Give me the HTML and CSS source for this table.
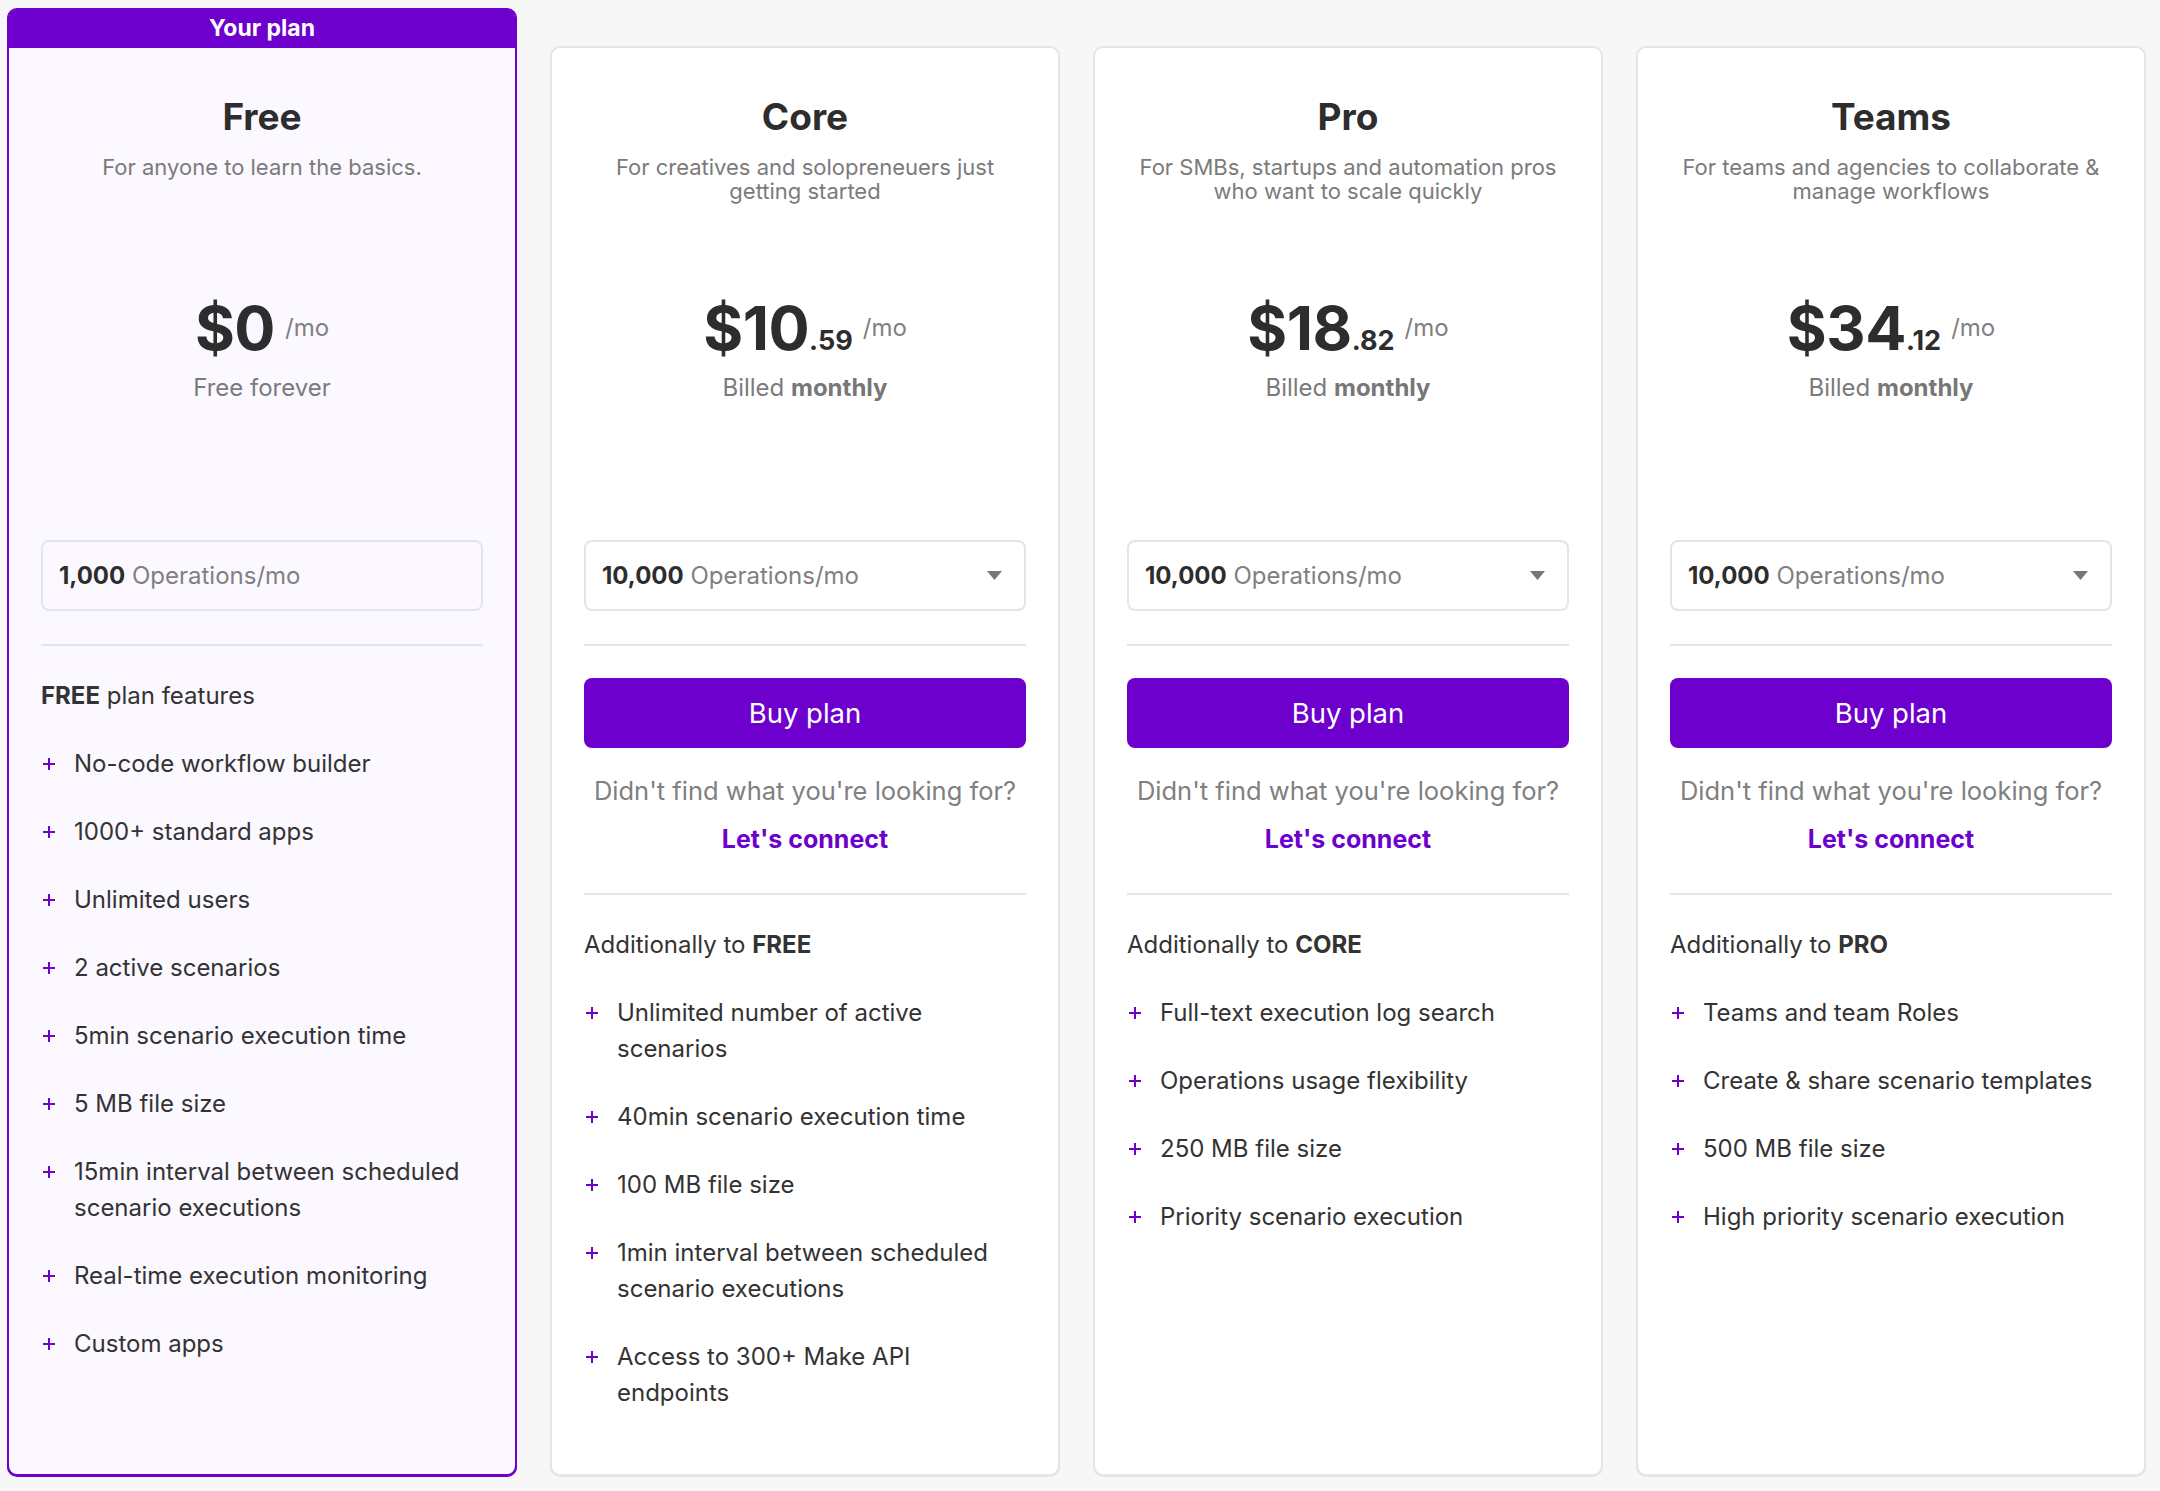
FILE: index.html
```html
<!DOCTYPE html>
<html lang="en">
<head>
  <meta charset="UTF-8" />
  <meta name="viewport" content="width=device-width, initial-scale=1.0" />
  <title>Pricing</title>
  <link rel="stylesheet" href="styles.css">
</head>
<body>
  <div class="plans">

    <div class="plan current">
      <div class="plan-badge">Your plan</div>
      <div class="plan-body">
        <h2>Free</h2>
        <p class="plan-desc">For anyone to learn the basics.</p>
        <div class="price"><span class="amount">$0</span><span class="per">/mo</span></div>
        <div class="billed">Free forever</div>
        <div class="ops"><b>1,000</b>&nbsp;Operations/mo</div>
        <hr>
        <div class="features-title"><b>FREE</b> plan features</div>
        <ul class="features">
          <li>No-code workflow builder</li>
          <li>1000+ standard apps</li>
          <li>Unlimited users</li>
          <li>2 active scenarios</li>
          <li>5min scenario execution time</li>
          <li>5 MB file size</li>
          <li>15min interval between scheduled scenario executions</li>
          <li>Real-time execution monitoring</li>
          <li>Custom apps</li>
        </ul>
      </div>
    </div>

    <div class="plan">
      <div class="plan-body">
        <h2>Core</h2>
        <p class="plan-desc">For creatives and solopreneuers just getting started</p>
        <div class="price"><span class="amount">$10<small>.59</small></span><span class="per">/mo</span></div>
        <div class="billed">Billed <b>monthly</b></div>
        <div class="ops select"><b>10,000</b>&nbsp;Operations/mo
          <svg class="caret" width="15" height="9" viewBox="0 0 15 9"><path d="M0 0h15L7.5 9z" fill="#777"/></svg>
        </div>
        <hr>
        <button class="buy">Buy plan</button>
        <p class="help">Didn't find what you're looking for?</p>
        <a class="connect" href="#">Let's connect</a>
        <hr>
        <div class="features-title">Additionally to <b>FREE</b></div>
        <ul class="features">
          <li>Unlimited number of active scenarios</li>
          <li>40min scenario execution time</li>
          <li>100 MB file size</li>
          <li>1min interval between scheduled scenario executions</li>
          <li>Access to 300+ Make API endpoints</li>
        </ul>
      </div>
    </div>

    <div class="plan">
      <div class="plan-body">
        <h2>Pro</h2>
        <p class="plan-desc">For SMBs, startups and automation pros who want to scale quickly</p>
        <div class="price"><span class="amount">$18<small>.82</small></span><span class="per">/mo</span></div>
        <div class="billed">Billed <b>monthly</b></div>
        <div class="ops select"><b>10,000</b>&nbsp;Operations/mo
          <svg class="caret" width="15" height="9" viewBox="0 0 15 9"><path d="M0 0h15L7.5 9z" fill="#777"/></svg>
        </div>
        <hr>
        <button class="buy">Buy plan</button>
        <p class="help">Didn't find what you're looking for?</p>
        <a class="connect" href="#">Let's connect</a>
        <hr>
        <div class="features-title">Additionally to <b>CORE</b></div>
        <ul class="features">
          <li>Full-text execution log search</li>
          <li>Operations usage flexibility</li>
          <li>250 MB file size</li>
          <li>Priority scenario execution</li>
        </ul>
      </div>
    </div>

    <div class="plan">
      <div class="plan-body">
        <h2>Teams</h2>
        <p class="plan-desc">For teams and agencies to collaborate &amp; manage workflows</p>
        <div class="price"><span class="amount">$34<small>.12</small></span><span class="per">/mo</span></div>
        <div class="billed">Billed <b>monthly</b></div>
        <div class="ops select"><b>10,000</b>&nbsp;Operations/mo
          <svg class="caret" width="15" height="9" viewBox="0 0 15 9"><path d="M0 0h15L7.5 9z" fill="#777"/></svg>
        </div>
        <hr>
        <button class="buy">Buy plan</button>
        <p class="help">Didn't find what you're looking for?</p>
        <a class="connect" href="#">Let's connect</a>
        <hr>
        <div class="features-title">Additionally to <b>PRO</b></div>
        <ul class="features">
          <li>Teams and team Roles</li>
          <li>Create &amp; share scenario templates</li>
          <li>500 MB file size</li>
          <li>High priority scenario execution</li>
        </ul>
      </div>
    </div>

  </div>
</body>
</html>
```

FILE: styles.css
```css
* { box-sizing: border-box; }
body {
  margin: 0;
  background: #f7f7f7;
  color: #333;
  font-family: Inter, "Noto Sans", sans-serif;
}
.plans {
  display: flex;
  gap: 33px;
  padding: 8px 14px 15px 7px;
  min-height: 1491px;
}
.plan {
  flex: 1;
  display: flex;
  flex-direction: column;
  margin-top: 38px;
  background: #fff;
  border: 2px solid #e4e4ea;
  border-radius: 10px;
  box-shadow: 0 1px 0 #e4e4ea;
}
.plan.current {
  margin-top: 0;
  background: #fcf8ff;
  border-color: #6d00cc;
  box-shadow: 0 1px 0 #6d00cc;
}
.plan-badge {
  height: 38px;
  background: #6d00cc;
  color: #fff;
  font-size: 23px;
  font-weight: 700;
  line-height: 36px;
  text-align: center;
  border-radius: 7px 7px 0 0;
}
.plan-body {
  flex: 1;
  padding: 0 32px 40px;
  text-align: center;
}
h2 {
  margin: 47px 0 0;
  font-size: 37px;
  line-height: 44px;
  font-weight: 700;
  color: #2d2d2d;
}
.plan-desc {
  margin: 16px 0 0;
  min-height: 48px;
  font-size: 22px;
  line-height: 24px;
  color: #7b7b7b;
}
.price {
  margin-top: 90px;
  height: 70px;
  display: flex;
  justify-content: center;
  align-items: baseline;
  line-height: 70px;
}
.amount {
  font-size: 61px;
  font-weight: 700;
  color: #2d2d2d;
  letter-spacing: -0.5px;
}
.amount small {
  font-size: 27px;
  letter-spacing: 0;
}
.per {
  margin-left: 10px;
  font-size: 24px;
  color: #808080;
  position: relative;
  top: -14px;
}
.billed {
  margin-top: 10px;
  font-size: 24px;
  line-height: 30px;
  color: #7b7b7b;
}
.billed b { color: #777; }
.ops {
  margin-top: 137px;
  height: 71px;
  display: flex;
  align-items: center;
  padding: 0 22px 0 16px;
  border: 2px solid #e4e4ea;
  border-radius: 8px;
  font-size: 24px;
  color: #808080;
  text-align: left;
}
.ops b { color: #2d2d2d; }
.ops.select { background: #fff; }
.caret { margin-left: auto; }
hr {
  margin: 33px 0 0;
  border: none;
  height: 2px;
  background: #e4e4ea;
}
.buy {
  display: block;
  width: 100%;
  margin-top: 32px;
  height: 70px;
  border: none;
  border-radius: 8px;
  background: #6d00cc;
  color: #fff;
  font-family: inherit;
  font-size: 27.5px;
  cursor: pointer;
}
.help {
  margin: 25px 0 0;
  font-size: 25.5px;
  line-height: 36px;
  color: #808080;
}
.connect {
  display: block;
  margin-top: 12px;
  font-size: 25px;
  line-height: 36px;
  font-weight: 700;
  color: #6d00cc;
  text-decoration: none;
}
.connect + hr { margin-top: 36px; }
.features-title {
  margin-top: 32px;
  font-size: 24px;
  line-height: 36px;
  text-align: left;
}
.features {
  list-style: none;
  margin: 0;
  padding: 0 14px 0 0;
  text-align: left;
}
.features li {
  position: relative;
  margin-top: 32px;
  padding-left: 33px;
  font-size: 24px;
  line-height: 36px;
}
.features li::before {
  content: "";
  position: absolute;
  left: 2px;
  top: 12px;
  width: 12px;
  height: 12px;
  background:
    linear-gradient(#6d00cc, #6d00cc) center / 12px 2px no-repeat,
    linear-gradient(#6d00cc, #6d00cc) center / 2px 12px no-repeat;
}
```
